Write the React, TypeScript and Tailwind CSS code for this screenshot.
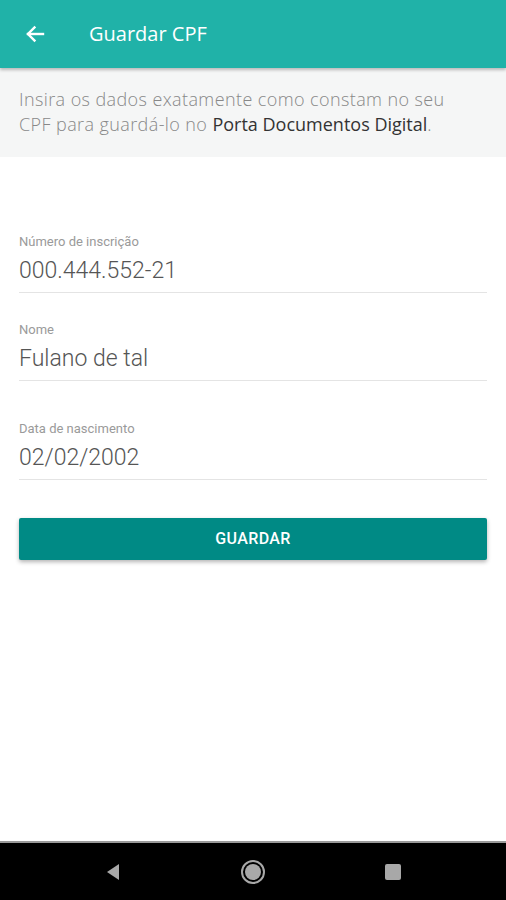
import React from 'react';

const fields = [
    { label: 'Número de inscrição', value: '000.444.552-21', gap: 'mt-[76px]' },
    { label: 'Nome', value: 'Fulano de tal', gap: 'mt-[28px]' },
    { label: 'Data de nascimento', value: '02/02/2002', gap: 'mt-[39px]' },
];

const App: React.FC = () => {
    return (
        <div className="flex h-[900px] w-[506px] flex-col bg-white font-['Open_Sans',sans-serif]">
            {/* toolbar */}
            <header className="relative z-10 flex h-[68px] items-center bg-[#20b2a8] shadow-[0_2px_3px_rgba(0,0,0,0.25)]">
                <svg className="ml-[23px] h-[24px] w-[24px]" viewBox="0 0 24 24" fill="none" stroke="#fff" strokeWidth="2.4" strokeLinecap="square">
                    <path d="M20 12H5" />
                    <path d="M11.5 5.5L5 12l6.5 6.5" />
                </svg>
                <h1 className="ml-[42px] text-[20px] font-medium text-white">Guardar CPF</h1>
            </header>

            {/* intro */}
            <div className="h-[89px] bg-[#f5f6f6] pl-[19px] pr-[50px] pt-[19px] text-[18px] font-light leading-[25px] tracking-[0.4px] text-[#888]">
                Insira os dados exatamente como constam no seu CPF para guardá-lo no{' '}
                <span className="font-normal tracking-normal text-[#333]">Porta Documentos Digital</span>.
            </div>

            {/* form */}
            <div className="flex flex-col px-[19px]">
                {fields.map(f => (
                    <div key={f.label} className={`${f.gap} border-b border-[#e4e4e4]`}>
                        <div className="font-['Roboto',sans-serif] text-[13px] leading-[18px] text-[#9a9a9a]">{f.label}</div>
                        <div className="mt-[5px] pb-[6px] font-['Roboto',sans-serif] text-[23px] font-light leading-[30px] text-[#555]">{f.value}</div>
                    </div>
                ))}

                <button className="mt-[38px] h-[42px] w-full rounded-[2px] bg-[#008a85] font-['Roboto',sans-serif] text-[16px] font-medium tracking-[0.4px] text-white shadow-[0_2px_4px_rgba(0,0,0,0.3)]">
                    GUARDAR
                </button>
            </div>

            <div className="flex-1" />

            {/* system navigation */}
            <nav className="flex h-[59px] items-center justify-center border-t-[2px] border-[#9a9a9a] bg-black">
                <div className="flex w-[296px] items-center justify-between">
                    <svg width="16" height="18" viewBox="0 0 16 18">
                        <path d="M14 1 L2 9 L14 17 Z" fill="#a8a8a8" />
                    </svg>
                    <svg width="26" height="26" viewBox="0 0 26 26">
                        <circle cx="13" cy="13" r="11" fill="none" stroke="#a8a8a8" strokeWidth="2" />
                        <circle cx="13" cy="13" r="8" fill="#a8a8a8" />
                    </svg>
                    <div className="h-[16px] w-[16px] rounded-[2px] bg-[#a8a8a8]" />
                </div>
            </nav>
        </div>
    );
};

export default App;
